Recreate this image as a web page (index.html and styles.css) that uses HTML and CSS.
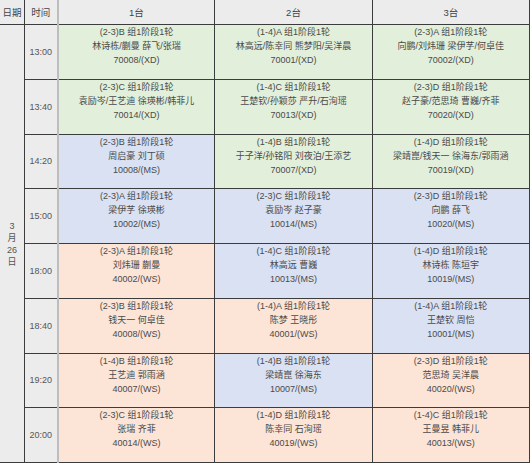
FILE: index.html
```html
<!DOCTYPE html>
<html lang="zh">
<head>
<meta charset="utf-8">
<title>赛程表</title>
<link rel="stylesheet" href="styles.css">
</head>
<body>
<table class="sched">
  <colgroup>
    <col class="c-date"><col class="c-time"><col class="c-t"><col class="c-t"><col class="c-t">
  </colgroup>
  <thead>
    <tr class="hdr">
      <th>日期</th><th class="time">时间</th><th>1台</th><th>2台</th><th>3台</th>
    </tr>
  </thead>
  <tbody>
    <tr>
      <td class="date" rowspan="8">3<br>月<br>26<br>日</td>
      <td class="time">13:00</td>
      <td class="m g"><div>(2-3)B 组1阶段1轮</div><div>林诗栋/蒯曼 薛飞/张瑞</div><div>70008/(XD)</div></td>
      <td class="m g"><div>(1-4)A 组1阶段1轮</div><div>林高远/陈幸同 熊梦阳/吴洋晨</div><div>70001/(XD)</div></td>
      <td class="m g"><div>(2-3)A 组1阶段1轮</div><div>向鹏/刘炜珊 梁伊芓/何卓佳</div><div>70002/(XD)</div></td>
    </tr>
    <tr>
      <td class="time">13:40</td>
      <td class="m g"><div>(2-3)C 组1阶段1轮</div><div>袁励岑/王艺迪 徐瑛彬/韩菲儿</div><div>70014/(XD)</div></td>
      <td class="m g"><div>(1-4)C 组1阶段1轮</div><div>王楚钦/孙颖莎 严升/石洵瑶</div><div>70013/(XD)</div></td>
      <td class="m g"><div>(2-3)D 组1阶段1轮</div><div>赵子豪/范思琦 曹巍/齐菲</div><div>70020/(XD)</div></td>
    </tr>
    <tr>
      <td class="time">14:20</td>
      <td class="m b"><div>(2-3)B 组1阶段1轮</div><div>周启豪 刘丁硕</div><div>10008/(MS)</div></td>
      <td class="m g"><div>(1-4)B 组1阶段1轮</div><div>于子洋/孙铭阳 刘夜泊/王添艺</div><div>70007/(XD)</div></td>
      <td class="m g"><div>(1-4)D 组1阶段1轮</div><div>梁靖崑/钱天一 徐海东/郭雨涵</div><div>70019/(XD)</div></td>
    </tr>
    <tr>
      <td class="time">15:00</td>
      <td class="m b"><div>(2-3)A 组1阶段1轮</div><div>梁伊芓 徐瑛彬</div><div>10002/(MS)</div></td>
      <td class="m b"><div>(2-3)C 组1阶段1轮</div><div>袁励岑 赵子豪</div><div>10014/(MS)</div></td>
      <td class="m b"><div>(2-3)D 组1阶段1轮</div><div>向鹏 薛飞</div><div>10020/(MS)</div></td>
    </tr>
    <tr>
      <td class="time">18:00</td>
      <td class="m p"><div>(2-3)A 组1阶段1轮</div><div>刘炜珊 蒯曼</div><div>40002/(WS)</div></td>
      <td class="m b"><div>(1-4)C 组1阶段1轮</div><div>林高远 曹巍</div><div>10013/(MS)</div></td>
      <td class="m b"><div>(1-4)D 组1阶段1轮</div><div>林诗栋 陈垣宇</div><div>10019/(MS)</div></td>
    </tr>
    <tr>
      <td class="time">18:40</td>
      <td class="m p"><div>(2-3)B 组1阶段1轮</div><div>钱天一 何卓佳</div><div>40008/(WS)</div></td>
      <td class="m p"><div>(1-4)A 组1阶段1轮</div><div>陈梦 王晓彤</div><div>40001/(WS)</div></td>
      <td class="m b"><div>(1-4)A 组1阶段1轮</div><div>王楚钦 周恺</div><div>10001/(MS)</div></td>
    </tr>
    <tr>
      <td class="time">19:20</td>
      <td class="m p"><div>(1-4)B 组1阶段1轮</div><div>王艺迪 郭雨涵</div><div>40007/(WS)</div></td>
      <td class="m b"><div>(1-4)B 组1阶段1轮</div><div>梁靖崑 徐海东</div><div>10007/(MS)</div></td>
      <td class="m p"><div>(2-3)D 组1阶段1轮</div><div>范思琦 吴洋晨</div><div>40020/(WS)</div></td>
    </tr>
    <tr>
      <td class="time">20:00</td>
      <td class="m p"><div>(2-3)C 组1阶段1轮</div><div>张瑞 齐菲</div><div>40014/(WS)</div></td>
      <td class="m p"><div>(1-4)D 组1阶段1轮</div><div>陈幸同 石洵瑶</div><div>40019/(WS)</div></td>
      <td class="m p"><div>(1-4)C 组1阶段1轮</div><div>王曼昱 韩菲儿</div><div>40013/(WS)</div></td>
    </tr>
  </tbody>
</table>
</body>
</html>
```
FILE: styles.css
```css
html, body {
  margin: 0;
  padding: 0;
  background: #ffffff;
}
body {
  font-family: "Liberation Sans", "Noto Sans CJK SC", sans-serif;
  font-size: 9px;
  color: #4a4a4a;
}
.sched {
  border-collapse: collapse;
  table-layout: fixed;
  width: 531px;
  margin: -1px 0 0 -1px;
}
.c-date { width: 25px; }
.c-time { width: 33px; }
.c-t { width: 157px; }
.sched th,
.sched td {
  border: 1px solid #3c3c3c;
  padding: 0;
  text-align: center;
}
.hdr th {
  height: 24px;
  background: #ececec;
  font-weight: normal;
  color: #444;
  font-size: 9.5px;
}
.sched tbody tr {
  height: 54.75px;
}
.date {
  background: #ececec;
  line-height: 12px;
  vertical-align: middle;
  color: #555;
}
.time {
  background: #ececec;
  color: #555;
  vertical-align: middle;
  border-right: 2px solid #bdbdbd !important;
}
.m {
  vertical-align: top;
  line-height: 14px;
  padding-top: 0;
}
.m div {
  white-space: nowrap;
}
.g { background: #e2efda; }
.b { background: #d9e1f2; }
.p { background: #fce4d6; }
```
